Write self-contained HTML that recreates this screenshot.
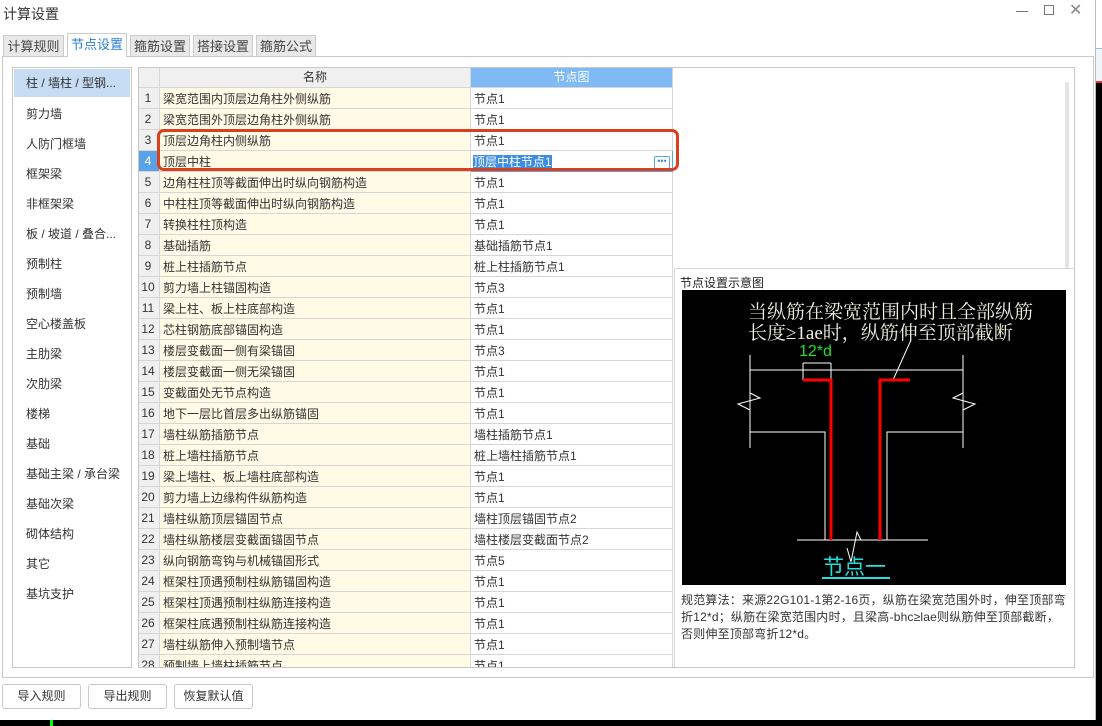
<!DOCTYPE html>
<html><head><meta charset="utf-8"><style>
*{box-sizing:border-box;margin:0;padding:0}
body{width:1102px;height:726px;overflow:hidden;background:#fff;font-family:"Liberation Sans","Noto Sans CJK SC",sans-serif;font-size:12px;color:#333;position:relative}
.abs{position:absolute}
.tab{position:absolute;top:35px;height:22px;background:#e8e8e8;border:1px solid #ccc;border-bottom:none;font-size:13px;line-height:21px;text-align:center;color:#444}
.li{position:absolute;left:26px;font-size:12px;color:#333}
table{border-collapse:collapse;table-layout:fixed}
td{height:21px;border:1px solid #d6d6d6;padding:0 3px;white-space:nowrap;overflow:hidden;font-size:12px;color:#333}
td.n{background:#f0f0f0;text-align:center;padding:0}
td.m{background:#fffbe6}
.btn{position:absolute;top:684px;height:25px;border:1px solid #c8c8c8;border-radius:3px;background:#fff;font-size:12px;line-height:23px;text-align:center;color:#333;white-space:nowrap}
</style></head><body>
<div class="abs" style="left:3px;top:4px;font-size:14px;color:#333">计算设置</div>
<div class="abs" style="left:1016px;top:11px;width:12px;border-top:1px solid #777"></div>
<div class="abs" style="left:1044px;top:5px;width:10px;height:10px;border:1px solid #777"></div>
<div class="abs" style="left:1069px;top:0px;font-size:16px;color:#888">✕</div>
<div class="abs" style="left:1095px;top:0;width:1px;height:720px;background:#bbb"></div>
<div class="abs" style="left:1096px;top:48px;width:6px;height:670px;background:#eef6fc;border-top:1px solid #8bc4f0"></div>
<div class="abs" style="left:1096px;top:81px;width:6px;height:2px;background:#e33"></div>
<div class="abs" style="left:1096px;top:83px;width:6px;height:640px;background:#000"></div>

<div class="tab" style="left:3px;width:61px">计算规则</div>
<div class="tab" style="left:67px;width:60px;top:33px;height:24px;background:#fff;color:#2a7fd4;z-index:2">节点设置</div>
<div class="tab" style="left:130px;width:60px">箍筋设置</div>
<div class="tab" style="left:193px;width:60px">搭接设置</div>
<div class="tab" style="left:256px;width:60px">箍筋公式</div>
<div class="abs" style="left:2px;top:56px;width:1092px;height:622px;border:1px solid #c8c8c8;background:#fff"></div>

<div class="abs" style="left:12px;top:67px;width:120px;height:601px;border:1px solid #c8c8c8;background:#fff"></div>
<div class="abs" style="left:14px;top:69px;width:116px;height:28px;background:#c6dcf2"></div>
<div class="li" style="top:74px">柱 / 墙柱 / 型钢...</div>
<div class="li" style="top:105px">剪力墙</div>
<div class="li" style="top:135px">人防门框墙</div>
<div class="li" style="top:165px">框架梁</div>
<div class="li" style="top:195px">非框架梁</div>
<div class="li" style="top:225px">板 / 坡道 / 叠合...</div>
<div class="li" style="top:255px">预制柱</div>
<div class="li" style="top:285px">预制墙</div>
<div class="li" style="top:315px">空心楼盖板</div>
<div class="li" style="top:345px">主肋梁</div>
<div class="li" style="top:375px">次肋梁</div>
<div class="li" style="top:405px">楼梯</div>
<div class="li" style="top:435px">基础</div>
<div class="li" style="top:465px">基础主梁 / 承台梁</div>
<div class="li" style="top:495px">基础次梁</div>
<div class="li" style="top:525px">砌体结构</div>
<div class="li" style="top:555px">其它</div>
<div class="li" style="top:585px">基坑支护</div>

<div class="abs" style="left:138px;top:67px;width:937px;height:601px;border:1px solid #c8c8c8;overflow:hidden">
<table style="width:534px;margin-left:-3px;margin-top:-3px">
<colgroup><col style="width:23px"><col style="width:311px"><col style="width:202px"></colgroup>
<tr><td class="n" style="height:22px"></td><td style="height:22px;background:#f0f0f0;text-align:center">名称</td><td style="height:22px;background:#7fbaf5;color:#fff;text-align:center">节点图</td></tr>
<tr><td class="n">1</td><td class="m">梁宽范围内顶层边角柱外侧纵筋</td><td>节点1</td></tr>
<tr><td class="n">2</td><td class="m">梁宽范围外顶层边角柱外侧纵筋</td><td>节点1</td></tr>
<tr><td class="n">3</td><td class="m">顶层边角柱内侧纵筋</td><td>节点1</td></tr>
<tr><td class="n" style="background:#5aa2e8;color:#fff">4</td><td class="m">顶层中柱</td><td style="border:1px solid #5aa2e8;padding:0 2px"><span style="background:#3d8ee0;color:#fff">顶层中柱节点1</span><span style="float:right;margin-top:3px;width:16px;height:13px;border:1px solid #5aa2e8;border-radius:2px;font-size:9px;line-height:9px;text-align:center;color:#3d8ee0">•••</span></td></tr>
<tr><td class="n">5</td><td class="m">边角柱柱顶等截面伸出时纵向钢筋构造</td><td>节点1</td></tr>
<tr><td class="n">6</td><td class="m">中柱柱顶等截面伸出时纵向钢筋构造</td><td>节点1</td></tr>
<tr><td class="n">7</td><td class="m">转换柱柱顶构造</td><td>节点1</td></tr>
<tr><td class="n">8</td><td class="m">基础插筋</td><td>基础插筋节点1</td></tr>
<tr><td class="n">9</td><td class="m">桩上柱插筋节点</td><td>桩上柱插筋节点1</td></tr>
<tr><td class="n">10</td><td class="m">剪力墙上柱锚固构造</td><td>节点3</td></tr>
<tr><td class="n">11</td><td class="m">梁上柱、板上柱底部构造</td><td>节点1</td></tr>
<tr><td class="n">12</td><td class="m">芯柱钢筋底部锚固构造</td><td>节点1</td></tr>
<tr><td class="n">13</td><td class="m">楼层变截面一侧有梁锚固</td><td>节点3</td></tr>
<tr><td class="n">14</td><td class="m">楼层变截面一侧无梁锚固</td><td>节点1</td></tr>
<tr><td class="n">15</td><td class="m">变截面处无节点构造</td><td>节点1</td></tr>
<tr><td class="n">16</td><td class="m">地下一层比首层多出纵筋锚固</td><td>节点1</td></tr>
<tr><td class="n">17</td><td class="m">墙柱纵筋插筋节点</td><td>墙柱插筋节点1</td></tr>
<tr><td class="n">18</td><td class="m">桩上墙柱插筋节点</td><td>桩上墙柱插筋节点1</td></tr>
<tr><td class="n">19</td><td class="m">梁上墙柱、板上墙柱底部构造</td><td>节点1</td></tr>
<tr><td class="n">20</td><td class="m">剪力墙上边缘构件纵筋构造</td><td>节点1</td></tr>
<tr><td class="n">21</td><td class="m">墙柱纵筋顶层锚固节点</td><td>墙柱顶层锚固节点2</td></tr>
<tr><td class="n">22</td><td class="m">墙柱纵筋楼层变截面锚固节点</td><td>墙柱楼层变截面节点2</td></tr>
<tr><td class="n">23</td><td class="m">纵向钢筋弯钩与机械锚固形式</td><td>节点5</td></tr>
<tr><td class="n">24</td><td class="m">框架柱顶遇预制柱纵筋锚固构造</td><td>节点1</td></tr>
<tr><td class="n">25</td><td class="m">框架柱顶遇预制柱纵筋连接构造</td><td>节点1</td></tr>
<tr><td class="n">26</td><td class="m">框架柱底遇预制柱纵筋连接构造</td><td>节点1</td></tr>
<tr><td class="n">27</td><td class="m">墙柱纵筋伸入预制墙节点</td><td>节点1</td></tr>
<tr><td class="n">28</td><td class="m">预制墙上墙柱插筋节点</td><td>节点1</td></tr>
</table>
<div class="abs" style="left:535px;top:200px;width:400px;height:400px;border-top:1px solid #d6d6d6;border-left:1px solid #d6d6d6"></div>
<div class="abs" style="left:926px;top:14px;width:4px;height:186px;background:#e4e4e4;border-radius:2px"></div>
</div>
<div class="abs" style="left:157px;top:129px;width:522px;height:42px;border:3px solid #d9401e;border-radius:7px"></div>

<div class="abs" style="left:680px;top:274px;font-size:12px;color:#222">节点设置示意图</div>
<svg class="abs" style="left:682px;top:290px" width="384" height="295" viewBox="682 290 384 295">
<rect x="682" y="290" width="384" height="295" fill="#000"/>
<g font-family="Liberation Serif,Noto Serif CJK SC,serif" font-size="19" fill="#f2f2e0">
<text x="748" y="318">当纵筋在梁宽范围内时且全部纵筋</text>
<text x="748" y="339">长度≥1ae时，纵筋伸至顶部截断</text>
</g>
<text x="799" y="356" font-family="Liberation Sans,sans-serif" font-size="16" fill="#22e022">12*d</text>
<g stroke="#fff" stroke-width="1" fill="none">
<line x1="750" y1="355" x2="750" y2="448"/><line x1="963" y1="355" x2="963" y2="448"/>
<line x1="750" y1="370" x2="963" y2="370"/>
<line x1="803" y1="363" x2="831" y2="363"/><line x1="803" y1="363" x2="803" y2="380"/><line x1="831" y1="363" x2="831" y2="380"/>
<line x1="893" y1="380" x2="911" y2="340"/>
<polyline points="750,432 825,432 825,540"/><polyline points="963,432 887,432 887,540"/>
<line x1="797" y1="540" x2="928" y2="540"/>
<polyline points="847,548 851,562 857,532 861,540"/>
<polyline points="750,393 760,398 738,404 750,410"/>
<polyline points="963,393 953,398 975,404 963,410"/>
</g>
<g stroke="#f00" stroke-width="3" fill="none">
<polyline points="803,380 831,380 831,540"/><polyline points="910,380 880,380 880,540"/>
</g>
<text x="823" y="574" font-family="Noto Sans CJK SC,sans-serif" font-size="21" fill="#1ee0e0">节点一</text>
<rect x="822" y="577" width="68" height="2" fill="#1ee0e0"/>
</svg>
<div class="abs" style="left:681px;top:592px;width:390px;font-size:12px;line-height:17px;color:#333;letter-spacing:0.2px">规范算法：来源22G101-1第2-16页，纵筋在梁宽范围外时，伸至顶部弯折12*d；纵筋在梁宽范围内时，且梁高-bhc≥lae则纵筋伸至顶部截断，否则伸至顶部弯折12*d。</div>

<div class="btn" style="left:2px;width:79px">导入规则</div>
<div class="btn" style="left:88px;width:79px">导出规则</div>
<div class="btn" style="left:174px;width:79px">恢复默认值</div>
<div class="abs" style="left:0;top:720px;width:1102px;height:6px;background:#000"></div>
<div class="abs" style="left:50px;top:720px;width:3px;height:6px;background:#0f0"></div>
</body></html>
